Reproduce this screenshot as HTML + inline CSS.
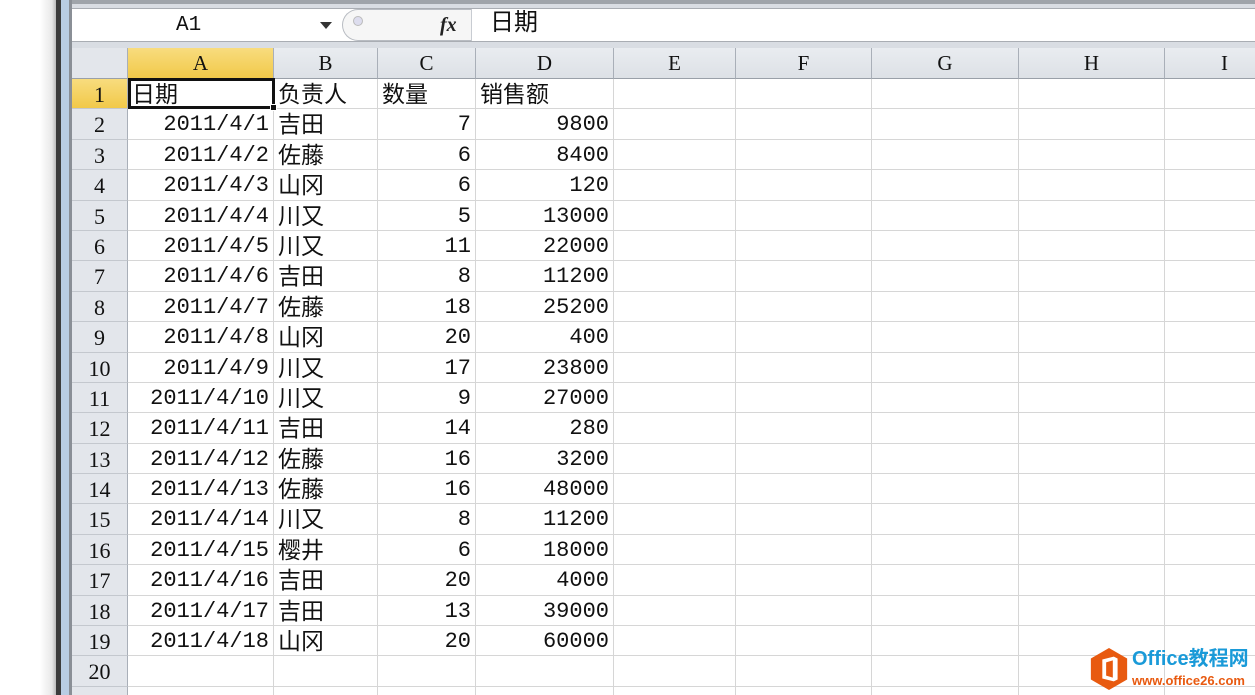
<!DOCTYPE html>
<html style="width:1255px;height:695px;overflow:hidden"><head><meta charset="utf-8"><style>
*{margin:0;padding:0;box-sizing:border-box}
body{width:1255px;height:695px;overflow:hidden;background:#fff;position:relative;font-family:"Liberation Mono","Noto Sans CJK SC",monospace}
.lf1{position:absolute;left:0;top:0;width:56px;height:695px;background:linear-gradient(90deg,#fff 0,#fff 40px,#e8e8e8 52px,#bbb 56px)}
.lf2{position:absolute;left:56px;top:0;width:5px;height:695px;background:#3c3c3c}
.lf3{position:absolute;left:61px;top:0;width:9px;height:695px;background:#b9cde3}
.lf4{position:absolute;left:69px;top:0;width:3px;height:695px;background:#8a8f96}
.top{position:absolute;left:72px;top:0;right:0;height:48px;background:#d9dde3}
.top1{position:absolute;left:72px;top:0;right:0;height:4px;background:#9fa4aa}
.fb{position:absolute;left:72px;top:8px;right:0;height:34px;background:#fff;border-top:1px solid #a9adb3;border-bottom:1px solid #a9adb3}
.nb{position:absolute;left:0;top:0;width:268px;height:32px;font-size:21px;line-height:34px;padding-left:104px;color:#111}
.arr{position:absolute;left:248px;top:13px;width:0;height:0;border-left:6px solid transparent;border-right:6px solid transparent;border-top:7px solid #333}
.pill{position:absolute;left:270px;top:0;width:130px;height:32px;border:1px solid #b8bcc2;border-radius:16px 0 0 16px;background:#f6f6f6;border-right:1px solid #c8ccd2}
.dot{position:absolute;left:10px;top:6px;width:10px;height:10px;border-radius:50%;background:#dde;border:1px solid #bbb}
.fx{position:absolute;left:368px;top:0;font:italic bold 20px "Liberation Serif",serif;line-height:32px;color:#222}
.fv{position:absolute;left:418px;top:-2px;font-size:24px;line-height:32px;font-family:"Liberation Sans","Noto Sans CJK SC",sans-serif;color:#111}
.grid{position:absolute;left:72px;top:48px;width:1183px}
.r{height:30.4px;white-space:nowrap;font-size:0}
.r>div{display:inline-block;height:30.4px;border-right:1px solid #d6d6d6;border-bottom:1px solid #d6d6d6;font-size:22px;line-height:32px;vertical-align:top;color:#111;overflow:hidden;padding:0 4px}
.h{height:31px}
.h>div{background:linear-gradient(#e9ecf0,#dde1e6);border-right:1px solid #a9afb8!important;border-bottom:1px solid #9aa0a8!important;text-align:center;font-family:"Liberation Serif",serif;font-size:21px!important;height:31px!important;line-height:31px!important}
.r>div:first-child{background:#e3e6eb;border-right:1px solid #a9afb8;border-bottom:1px solid #c4c8ce;text-align:center;font-family:"Liberation Serif",serif}
.c0{width:56px}.c1{width:146px;text-align:right}.c2{width:104px}.c3{width:98px;text-align:right}.c4{width:138px;text-align:right}.c5{width:122px}.c6{width:136px}.c7{width:147px}.c8{width:146px}.c9{width:120px}
.r>div.c2,.r>div.t{font-family:"Noto Sans CJK SC",sans-serif;font-size:23px;text-align:left;line-height:27px}
.hl{background:linear-gradient(#f8dc7e,#f1c949)!important}
.sel{position:absolute;left:128px;top:78px;width:147px;height:31px;border:3px solid #111}
.sq{position:absolute;left:270px;top:104px;width:7px;height:7px;background:#111;border:1px solid #fff}
.logo{position:absolute;left:1090px;top:648px}
.lt1{position:absolute;left:1132px;top:647px;font:bold 20px "Liberation Sans","Noto Sans CJK SC",sans-serif;color:#1a9ad8;white-space:nowrap;line-height:24px}
.lt2{position:absolute;left:1132px;top:673px;font:bold 13px "Liberation Sans",sans-serif;color:#e85a10;white-space:nowrap;line-height:16px}
</style></head><body>
<div class="lf1"></div><div class="lf2"></div><div class="lf3"></div><div class="lf4"></div>
<div class="top"></div><div class="top1"></div>
<div class="fb"><div class="nb">A1</div><div class="arr"></div><div class="pill"><div class="dot"></div></div><div class="fx">fx</div><div class="fv">日期</div></div>
<div class="grid">
<div class="r h"><div class="c0"></div><div class="c1 hl">A</div><div class="c3" style="width:104px">B</div><div class="c3">C</div><div class="c4">D</div><div class="c5">E</div><div class="c6">F</div><div class="c7">G</div><div class="c8">H</div><div class="c9">I</div></div>
<div class="r"><div class="c0 hl">1</div><div class="c1 t">日期</div><div class="c2">负责人</div><div class="c3 t">数量</div><div class="c4 t">销售额</div><div class="c5"></div><div class="c6"></div><div class="c7"></div><div class="c8"></div><div class="c9"></div></div>
<div class="r"><div class="c0">2</div><div class="c1">2011/4/1</div><div class="c2">吉田</div><div class="c3">7</div><div class="c4">9800</div><div class="c5"></div><div class="c6"></div><div class="c7"></div><div class="c8"></div><div class="c9"></div></div>
<div class="r"><div class="c0">3</div><div class="c1">2011/4/2</div><div class="c2">佐藤</div><div class="c3">6</div><div class="c4">8400</div><div class="c5"></div><div class="c6"></div><div class="c7"></div><div class="c8"></div><div class="c9"></div></div>
<div class="r"><div class="c0">4</div><div class="c1">2011/4/3</div><div class="c2">山冈</div><div class="c3">6</div><div class="c4">120</div><div class="c5"></div><div class="c6"></div><div class="c7"></div><div class="c8"></div><div class="c9"></div></div>
<div class="r"><div class="c0">5</div><div class="c1">2011/4/4</div><div class="c2">川又</div><div class="c3">5</div><div class="c4">13000</div><div class="c5"></div><div class="c6"></div><div class="c7"></div><div class="c8"></div><div class="c9"></div></div>
<div class="r"><div class="c0">6</div><div class="c1">2011/4/5</div><div class="c2">川又</div><div class="c3">11</div><div class="c4">22000</div><div class="c5"></div><div class="c6"></div><div class="c7"></div><div class="c8"></div><div class="c9"></div></div>
<div class="r"><div class="c0">7</div><div class="c1">2011/4/6</div><div class="c2">吉田</div><div class="c3">8</div><div class="c4">11200</div><div class="c5"></div><div class="c6"></div><div class="c7"></div><div class="c8"></div><div class="c9"></div></div>
<div class="r"><div class="c0">8</div><div class="c1">2011/4/7</div><div class="c2">佐藤</div><div class="c3">18</div><div class="c4">25200</div><div class="c5"></div><div class="c6"></div><div class="c7"></div><div class="c8"></div><div class="c9"></div></div>
<div class="r"><div class="c0">9</div><div class="c1">2011/4/8</div><div class="c2">山冈</div><div class="c3">20</div><div class="c4">400</div><div class="c5"></div><div class="c6"></div><div class="c7"></div><div class="c8"></div><div class="c9"></div></div>
<div class="r"><div class="c0">10</div><div class="c1">2011/4/9</div><div class="c2">川又</div><div class="c3">17</div><div class="c4">23800</div><div class="c5"></div><div class="c6"></div><div class="c7"></div><div class="c8"></div><div class="c9"></div></div>
<div class="r"><div class="c0">11</div><div class="c1">2011/4/10</div><div class="c2">川又</div><div class="c3">9</div><div class="c4">27000</div><div class="c5"></div><div class="c6"></div><div class="c7"></div><div class="c8"></div><div class="c9"></div></div>
<div class="r"><div class="c0">12</div><div class="c1">2011/4/11</div><div class="c2">吉田</div><div class="c3">14</div><div class="c4">280</div><div class="c5"></div><div class="c6"></div><div class="c7"></div><div class="c8"></div><div class="c9"></div></div>
<div class="r"><div class="c0">13</div><div class="c1">2011/4/12</div><div class="c2">佐藤</div><div class="c3">16</div><div class="c4">3200</div><div class="c5"></div><div class="c6"></div><div class="c7"></div><div class="c8"></div><div class="c9"></div></div>
<div class="r"><div class="c0">14</div><div class="c1">2011/4/13</div><div class="c2">佐藤</div><div class="c3">16</div><div class="c4">48000</div><div class="c5"></div><div class="c6"></div><div class="c7"></div><div class="c8"></div><div class="c9"></div></div>
<div class="r"><div class="c0">15</div><div class="c1">2011/4/14</div><div class="c2">川又</div><div class="c3">8</div><div class="c4">11200</div><div class="c5"></div><div class="c6"></div><div class="c7"></div><div class="c8"></div><div class="c9"></div></div>
<div class="r"><div class="c0">16</div><div class="c1">2011/4/15</div><div class="c2">樱井</div><div class="c3">6</div><div class="c4">18000</div><div class="c5"></div><div class="c6"></div><div class="c7"></div><div class="c8"></div><div class="c9"></div></div>
<div class="r"><div class="c0">17</div><div class="c1">2011/4/16</div><div class="c2">吉田</div><div class="c3">20</div><div class="c4">4000</div><div class="c5"></div><div class="c6"></div><div class="c7"></div><div class="c8"></div><div class="c9"></div></div>
<div class="r"><div class="c0">18</div><div class="c1">2011/4/17</div><div class="c2">吉田</div><div class="c3">13</div><div class="c4">39000</div><div class="c5"></div><div class="c6"></div><div class="c7"></div><div class="c8"></div><div class="c9"></div></div>
<div class="r"><div class="c0">19</div><div class="c1">2011/4/18</div><div class="c2">山冈</div><div class="c3">20</div><div class="c4">60000</div><div class="c5"></div><div class="c6"></div><div class="c7"></div><div class="c8"></div><div class="c9"></div></div>
<div class="r"><div class="c0">20</div><div class="c1"></div><div class="c2"></div><div class="c3"></div><div class="c4"></div><div class="c5"></div><div class="c6"></div><div class="c7"></div><div class="c8"></div><div class="c9"></div></div>
<div class="r"><div class="c0">21</div><div class="c1"></div><div class="c2"></div><div class="c3"></div><div class="c4"></div><div class="c5"></div><div class="c6"></div><div class="c7"></div><div class="c8"></div><div class="c9"></div></div>
</div>
<div class="sel"></div><div class="sq"></div>
<svg class="logo" width="38" height="42" viewBox="0 0 38 44"><polygon points="19,0 38,11 38,33 19,44 0,33 0,11" fill="#e85a10"/><path d="M12 12 L24 9 L28 11 L28 33 L24 35 L12 32 Z M16 15 L16 29 L23 31 L23 13 Z" fill="#fff" fill-rule="evenodd"/></svg>
<div class="lt1">Office教程网</div>
<div class="lt2">www.office26.com</div>
</body></html>
